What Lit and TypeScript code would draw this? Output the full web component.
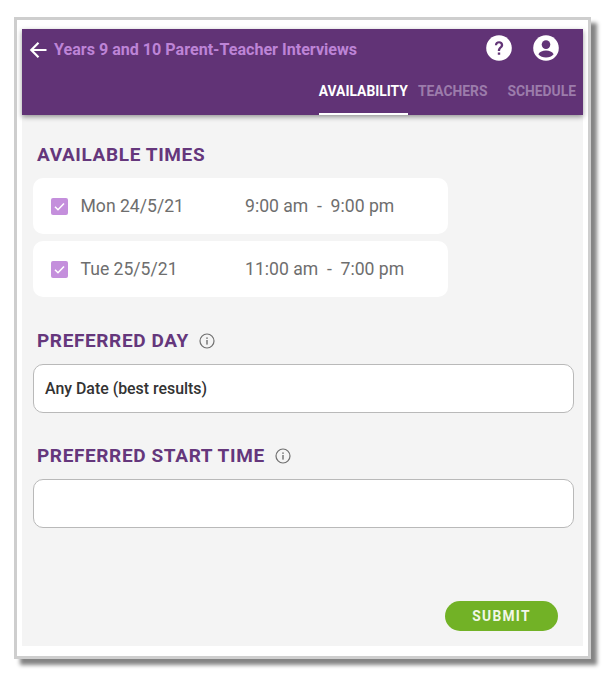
import { LitElement, html, css } from "lit";
import { customElement } from "lit/decorators.js";

const info = html`<svg class="info" viewBox="0 0 16 16" width="16" height="16"><circle cx="8" cy="8" r="7" fill="none" stroke="#6f6f6f" stroke-width="1.2"/><rect x="7.3" y="7" width="1.4" height="4.6" fill="#6f6f6f"/><rect x="7.3" y="4.4" width="1.4" height="1.5" fill="#6f6f6f"/></svg>`;
const check = html`<svg class="check" viewBox="0 0 17 17" width="17" height="17"><rect width="17" height="17" rx="2" fill="#c48fdc"/><path d="M4 8.700l3 3 6-6.200" fill="none" stroke="#fff" stroke-width="1.600"/></svg>`;

@customElement("app-root")
export class AppRoot extends LitElement {
  static styles = css`
    :host { display: block; width: 612px; height: 677px; box-sizing: border-box; padding: 17px 0 0 14px; font-family: Roboto, "Liberation Sans", sans-serif; background: #fff; overflow: hidden; }
    .frame { box-sizing: border-box; width: 577px; height: 642px; border: 3px solid #cecece; padding: 9px 5px 10px 5px; background: #fff; box-shadow: 6px 6px 4px #848484; display: flex; }
    .app { flex: 1; background: #f4f4f4; display: flex; flex-direction: column; min-width: 0; }
    header { height: 86px; background: #613376; box-shadow: 0 2px 5px rgba(0,0,0,.4); display: flex; flex-direction: column; flex: none; }
    .top { display: flex; align-items: center; height: 38px; padding: 0 0 0 7px; flex: none; }
    .back { flex: none; margin-right: 7px; margin-top: 3px; }
    .title { flex: 1; font-size: 16.1px; font-weight: 700; color: #bd84d6; white-space: nowrap; margin-top: 3px; }
    .icon { flex: none; display: block; }
    .help { margin-right: 21px; }
    .user { margin-right: 24px; }
    .tabs { display: flex; justify-content: flex-end; flex: 1; padding-right: 7px; }
    .tab { font-size: 13.85px; font-weight: 700; color: #9c7cab; height: 48px; box-sizing: border-box; padding-top: 16px; white-space: nowrap; }
    .tab.on { color: #fff; border-bottom: 2px solid #fff; margin-right: 10px; }
    .tab.mid { margin-right: 20px; }
    main { flex: 1; display: flex; flex-direction: column; padding: 0 9px 0 11px; position: relative; }
    h2 { margin: 0; font-size: 19px; line-height: 22px; font-weight: 700; letter-spacing: .62px; color: #65377c; padding-left: 4px; display: flex; align-items: center; gap: 10px; }
    .avail { margin-top: 29px; margin-bottom: 12px; }
    .row { width: 415px; height: 56px; box-sizing: border-box; background: #fff; border-radius: 10px; display: flex; align-items: center; padding-left: 18px; font-size: 17.6px; color: #6e6e6e; margin-bottom: 7px; }
    .date { margin-left: 12.500px; width: 164.500px; }
    .day { margin-top: 26px; }
    .start { margin-top: 32px; }
    .field { margin-top: 12px; height: 49px; box-sizing: border-box; border: 1px solid #b9b9b9; border-radius: 10px; background: #fff; display: flex; align-items: center; padding-left: 11px; font-size: 15.9px; font-weight: 500; color: #333; }
    .foot { display: flex; justify-content: flex-end; margin-top: 73px; padding-right: 16px; }
    .submit { border: 0; width: 113px; height: 30px; border-radius: 15px; background: #72b226; color: #f2f7e8; font: 700 13.8px Roboto, "Liberation Sans", sans-serif; letter-spacing: 1.250px; padding: 0; }
  `;

  render() {
    return html`<div class="frame"><div class="app">
      <header>
        <div class="top">
          <svg class="back icon" viewBox="0 0 18 18" width="18" height="18"><path d="M17.500 9H2.500M9.500 1.800L2.300 9l7.200 7.200" fill="none" stroke="#fff" stroke-width="2.200"/></svg>
          <div class="title">Years 9 and 10 Parent-Teacher Interviews</div>
          <svg class="icon help" viewBox="0 0 26 26" width="26" height="26"><circle cx="13" cy="13" r="12.800" fill="#fff"/><path d="M8.900 10.200c0-2.400 1.800-4 4.200-4s4.100 1.500 4.100 3.700c0 2.900-3.100 3-3.100 6.100h-2.300c0-4 3-3.900 3-6 0-1-.7-1.700-1.800-1.700s-1.800.8-1.900 1.900zM11.800 17.400h2.400v2.400h-2.400z" fill="#613376"/></svg>
          <svg class="icon user" viewBox="0 0 26 26" width="26" height="26"><circle cx="13" cy="13" r="12.800" fill="#fff"/><circle cx="13" cy="9.600" r="4.300" fill="#613376"/><path d="M5.400 19.200c1.200-2.600 4.300-3.800 7.600-3.800s6.400 1.200 7.600 3.800C18.800 21.400 16.100 22.500 13 22.500s-5.800-1.100-7.600-3.300z" fill="#613376"/></svg>
        </div>
        <div class="tabs">
          <div class="tab on">AVAILABILITY</div>
          <div class="tab mid">TEACHERS</div>
          <div class="tab">SCHEDULE</div>
        </div>
      </header>
      <main>
        <h2 class="avail">AVAILABLE TIMES</h2>
        <div class="row">${check}<span class="date">Mon 24/5/21</span><span>9:00 am&nbsp; -&nbsp; 9:00 pm</span></div>
        <div class="row">${check}<span class="date">Tue 25/5/21</span><span>11:00 am&nbsp; -&nbsp; 7:00 pm</span></div>
        <h2 class="day">PREFERRED DAY ${info}</h2>
        <div class="field">Any Date (best results)</div>
        <h2 class="start">PREFERRED START TIME ${info}</h2>
        <div class="field"></div>
        <div class="foot"><button class="submit">SUBMIT</button></div>
      </main>
    </div></div>`;
  }
}
